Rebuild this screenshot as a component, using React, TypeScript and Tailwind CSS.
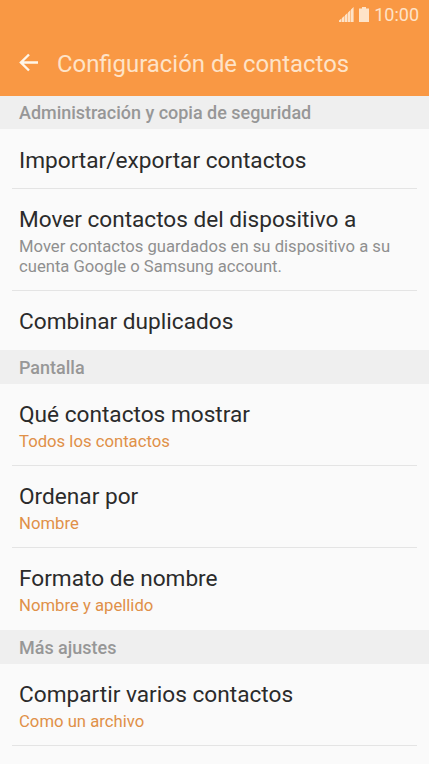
import React from "react";

function Section({ children, height = "h-[34px] pt-px" }: { children: React.ReactNode; height?: string }) {
  return (
    <h2 className={`${height} flex shrink-0 items-center bg-[#efefef] px-[19px] text-[17.98px] leading-[33px] font-medium whitespace-nowrap text-[#979797]`}>
      {children}
    </h2>
  );
}

function Row({ title, sub, height, pad, last }: { title: string; sub?: string; height: string; pad: string; last?: boolean }) {
  return (
    <div className={`${height} shrink-0 px-3`}>
      <div className={`h-full px-[7px] ${pad} ${last ? "" : "border-b border-[#e4e4e4]"}`}>
        <div className="text-[22.65px] leading-[28px] whitespace-nowrap text-[#2b2b2b]">{title}</div>
        {sub && <div className="text-[16.7px] leading-[26px] whitespace-nowrap text-[#e09048]">{sub}</div>}
      </div>
    </div>
  );
}

export default function App() {
  return (
    <div className="flex h-[764px] w-[429px] flex-col overflow-hidden bg-[#fafafa] font-['Roboto',sans-serif]">
      <header className="h-24 shrink-0 bg-[#f99844] text-[#fee3c8]">
        <div className="flex h-[29px] items-center justify-end pr-[10px]">
          <svg width="15" height="15" viewBox="0 0 15 15" fill="currentColor">
            <path d="M0 13.5L2.5 11.5V15H0zM3 11L5.5 8.7V15H3zM6 8.2L8.5 5.9V15H6zM9 5.4L11.5 3V15H9zM12 2.4L14.6 0V15H12z" />
          </svg>
          <svg className="ml-[5px]" width="10" height="15" viewBox="0 0 10 15" fill="currentColor">
            <path d="M3 0h4v1.5h3V15H0V1.5h3z" />
          </svg>
          <span className="ml-[5px] text-[18px]">10:00</span>
        </div>
        <div className="flex h-[67px] items-center pl-[19px]">
          <svg width="20" height="20" viewBox="0 0 20 20" fill="none" stroke="#fff6e8" strokeWidth="2.4">
            <path d="M19 9.5H2M10 1.5L1.9 9.5L10 17.5" />
          </svg>
          <h1 className="ml-[18px] pt-[3px] text-[23.9px] leading-[36px] whitespace-nowrap">Configuración de contactos</h1>
        </div>
      </header>
      <Section height="h-[33px]">Administración y copia de seguridad</Section>
      <Row title="Importar/exportar contactos" height="h-[60px]" pad="pt-[18px]" />
      <div className="h-[102px] shrink-0 px-3">
        <div className="h-full border-b border-[#e4e4e4] px-[7px] pt-[17px]">
          <div className="text-[22.6px] leading-[28px] whitespace-nowrap text-[#2b2b2b]">Mover contactos del dispositivo a</div>
          <div className="pt-[3px] text-[16.65px] leading-[20px] whitespace-nowrap text-[#8f8f8f]">
            Mover contactos guardados en su dispositivo a su<br />cuenta Google o Samsung account.
          </div>
        </div>
      </div>
      <Row title="Combinar duplicados" height="h-[59px]" pad="pt-[17px]" last />
      <Section>Pantalla</Section>
      <Row title="Qué contactos mostrar" sub="Todos los contactos" height="h-[82px]" pad="pt-[17px]" />
      <Row title="Ordenar por" sub="Nombre" height="h-[82px]" pad="pt-[17px]" />
      <Row title="Formato de nombre" sub="Nombre y apellido" height="h-[82px]" pad="pt-[17px]" last />
      <Section>Más ajustes</Section>
      <Row title="Compartir varios contactos" sub="Como un archivo" height="h-[82px]" pad="pt-[17px]" />
    </div>
  );
}
